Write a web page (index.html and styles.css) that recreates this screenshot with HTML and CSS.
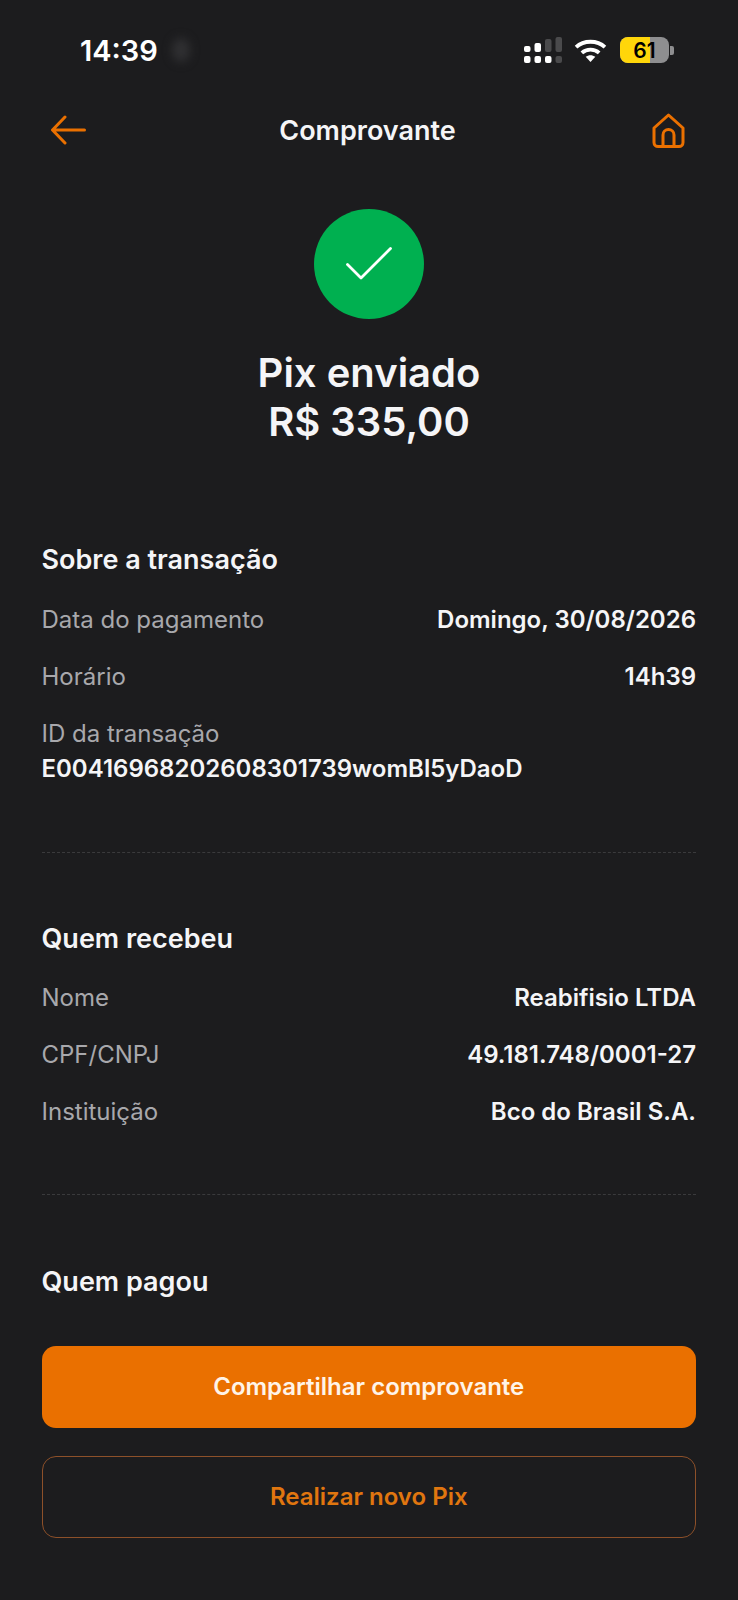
FILE: index.html
```html
<!DOCTYPE html>
<html lang="pt-BR">
<head>
<meta charset="utf-8">
<title>Comprovante</title>
<link rel="stylesheet" href="styles.css">
</head>
<body>
<div class="screen">
  <div class="status">
    <div class="time">14:39</div>
    <div class="blur"></div>
    <div class="status-right">
      <svg class="signal" width="38" height="26" viewBox="0 0 38 26" fill="#fff">
        <rect x="0" y="9" width="6.500" height="6" rx="2"/><rect x="10.500" y="6" width="6.500" height="9" rx="2"/><rect x="21" y="2" width="6.500" height="13" rx="2" fill="#4a4a4c"/><rect x="31.500" y="0" width="6.500" height="15" rx="2" fill="#4a4a4c"/>
        <rect x="0" y="19" width="6.500" height="7" rx="2"/><rect x="10.500" y="19" width="6.500" height="7" rx="2"/><rect x="21" y="19" width="6.500" height="7" rx="2"/><rect x="31.500" y="19" width="6.500" height="7" rx="2" fill="#4a4a4c"/>
      </svg>
      <svg class="wifi" width="33" height="25" viewBox="0 0 34 26" fill="none" stroke="#fff" stroke-width="4">
        <path d="M2 9.500C10 2 24 2 32 9.500"/><path d="M8 15.500C13 11 21 11 26 15.500"/><path d="M17 25l-5-5.500c3-2.200 7-2.200 10 0z" fill="#fff" stroke="none"/>
      </svg>
      <div class="battery"><div class="battery-fill"></div><span class="battery-num">61</span></div>
      <div class="battery-tip"></div>
    </div>
  </div>

  <header class="nav">
    <svg class="icon" width="36" height="30" viewBox="0 0 36 30" fill="none" stroke="#ea7000" stroke-width="3" stroke-linecap="round" stroke-linejoin="round">
      <path d="M34.500 15H3M15 2 2.500 15 15 28"/>
    </svg>
    <h1 class="nav-title">Comprovante</h1>
    <svg class="icon home" width="33" height="35" viewBox="0 0 33 35" fill="none" stroke="#ea7000" stroke-width="3" stroke-linecap="round" stroke-linejoin="round">
      <path d="M2 15 16.500 2 31 15v14.500a4 4 0 0 1-4 4H6a4 4 0 0 1-4-4z"/>
      <path d="M11 33.500V22a5.500 5.500 0 0 1 11 0v11.500"/>
    </svg>
  </header>

  <div class="hero">
    <div class="check">
      <svg width="46" height="34" viewBox="0 0 46 34" fill="none" stroke="#fff" stroke-width="2.800" stroke-linecap="round" stroke-linejoin="round">
        <path d="M1.500 17.500 15 31 44.500 1.500"/>
      </svg>
    </div>
    <div class="hero-text">Pix enviado<br>R$ 335,00</div>
  </div>

  <section class="block first">
    <h2 class="block-title">Sobre a transação</h2>
    <div class="row"><span class="label">Data do pagamento</span><span class="value">Domingo, 30/08/2026</span></div>
    <div class="row"><span class="label">Horário</span><span class="value">14h39</span></div>
    <div class="stack"><span class="label">ID da transação</span><span class="value">E00416968202608301739womBl5yDaoD</span></div>
  </section>
  <div class="divider one"></div>

  <section class="block">
    <h2 class="block-title">Quem recebeu</h2>
    <div class="row"><span class="label">Nome</span><span class="value">Reabifisio LTDA</span></div>
    <div class="row"><span class="label">CPF/CNPJ</span><span class="value">49.181.748/0001-27</span></div>
    <div class="row"><span class="label">Instituição</span><span class="value">Bco do Brasil S.A.</span></div>
  </section>
  <div class="divider two"></div>

  <section class="block">
    <h2 class="block-title">Quem pagou</h2>
  </section>

  <div class="actions">
    <button class="btn primary">Compartilhar comprovante</button>
    <button class="btn outline">Realizar novo Pix</button>
  </div>
</div>
</body>
</html>
```
FILE: styles.css
```css
* { box-sizing: border-box; }
html, body { margin: 0; padding: 0; background: #1c1c1e; }
body { font-family: Inter, "Liberation Sans", sans-serif; color: #f5f5f7; }
.screen { width: 738px; height: 1600px; overflow: hidden; display: flex; flex-direction: column; background: #1c1c1e; }

.status { height: 100px; flex: none; display: flex; align-items: center; padding: 0 64px 0 80px; position: relative; }
.time { font-size: 29px; font-weight: 600; color: #fff; }
.blur { width: 18px; height: 24px; margin-left: 14px; border-radius: 50%; background: #303032; filter: blur(5px); }
.status-right { margin-left: auto; display: flex; align-items: center; }
.signal { margin-right: 12px; }
.wifi { margin-right: 13px; }
.battery { width: 49px; height: 26px; border-radius: 8px; background: #8e8e90; overflow: hidden; position: relative; display: flex; align-items: center; justify-content: center; }
.battery-fill { position: absolute; left: 0; top: 0; bottom: 0; width: 30px; background: #ffd60a; }
.battery-num { position: relative; font-size: 21px; font-weight: 600; color: #000; }
.battery-tip { width: 4px; height: 9px; margin-left: 1px; border-radius: 0 2px 2px 0; background: #8e8e90; }

.nav { height: 60px; flex: none; display: grid; grid-template-columns: 1fr auto 1fr; align-items: center; padding: 0 53px 0 50px; }
.home { justify-self: end; }
.nav-title { margin: 0; font-size: 27px; font-weight: 600; color: #f5f5f7; }

.hero { display: flex; flex-direction: column; align-items: center; margin-top: 49px; }
.check { width: 110px; height: 110px; border-radius: 50%; background: #00b050; display: flex; align-items: center; justify-content: center; }
.hero-text { margin-top: 29px; font-size: 40px; line-height: 49px; font-weight: 600; text-align: center; color: #f5f5f7; }

.block { padding: 0 42px 0 41.500px; }
.block.first { margin-top: 97px; }
.block-title { margin: 0 0 13.500px; font-size: 27px; line-height: 34px; font-weight: 600; color: #f5f5f7; }
.row { display: flex; justify-content: space-between; align-items: center; height: 57px; font-size: 24px; }
.stack { display: flex; flex-direction: column; margin-top: 11px; font-size: 24px; line-height: 35px; }
.label { color: #a8a8ac; }
.value { font-weight: 600; color: #f5f5f7; }

.divider { height: 0; margin: 0 42px; border-top: 1px dashed #3a3a3c; }
.divider.one { margin-top: 66px; margin-bottom: 69px; }
.divider.two { margin-top: 54px; margin-bottom: 70px; }

.actions { margin-top: 33px; padding: 0 42px 0 41.500px; display: flex; flex-direction: column; gap: 28px; }
.btn { height: 82px; border-radius: 14px; font-family: inherit; font-size: 24px; font-weight: 600; }
.btn.primary { background: #ea7000; border: 0; color: #fff4e8; }
.btn.outline { background: transparent; border: 1.500px solid #8d5029; color: #e0760f; }
```
